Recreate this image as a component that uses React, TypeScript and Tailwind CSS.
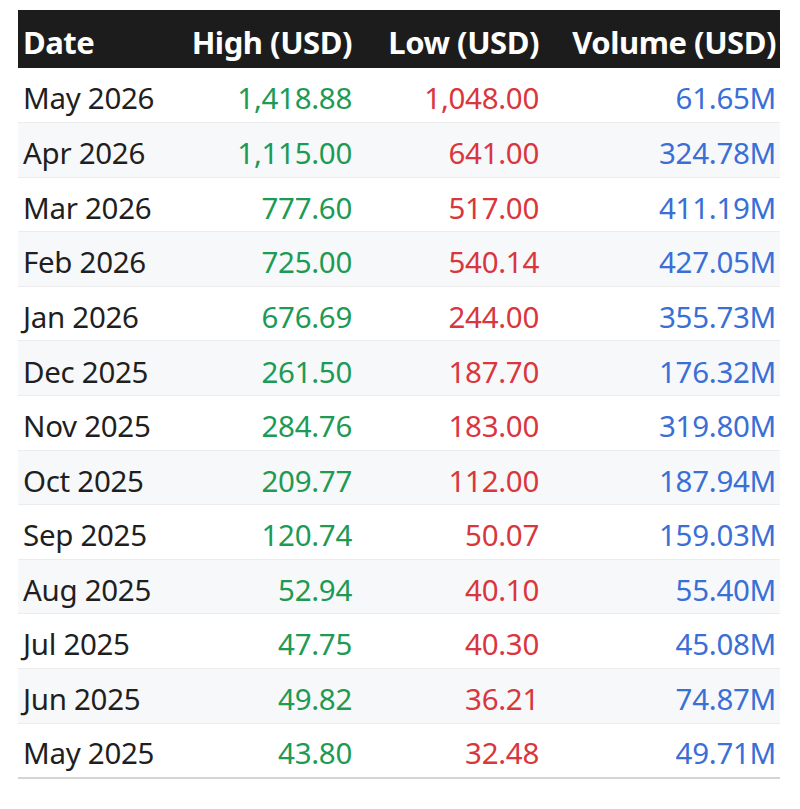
const rows = [
  ["May 2026", "1,418.88", "1,048.00", "61.65M"],
  ["Apr 2026", "1,115.00", "641.00", "324.78M"],
  ["Mar 2026", "777.60", "517.00", "411.19M"],
  ["Feb 2026", "725.00", "540.14", "427.05M"],
  ["Jan 2026", "676.69", "244.00", "355.73M"],
  ["Dec 2025", "261.50", "187.70", "176.32M"],
  ["Nov 2025", "284.76", "183.00", "319.80M"],
  ["Oct 2025", "209.77", "112.00", "187.94M"],
  ["Sep 2025", "120.74", "50.07", "159.03M"],
  ["Aug 2025", "52.94", "40.10", "55.40M"],
  ["Jul 2025", "47.75", "40.30", "45.08M"],
  ["Jun 2025", "49.82", "36.21", "74.87M"],
  ["May 2025", "43.80", "32.48", "49.71M"],
];

export default function App() {
  return (
    <div
      className="min-h-screen bg-white pt-[10px] pl-[18px]"
      style={{ fontFamily: '"Noto Sans", "Open Sans", sans-serif' }}
    >
      <table className="w-[762px] border-collapse text-[29.5px] tracking-[-0.01em]">
        <colgroup>
          <col className="w-[168px]" />
          <col className="w-[170px]" />
          <col className="w-[187px]" />
          <col className="w-[237px]" />
        </colgroup>
        <thead>
          <tr className="h-[58px] bg-[#1c1c1c] text-white font-bold text-[31px] tracking-[-0.015em]">
            <th className="px-[5px] pt-[6px] leading-none text-left">Date</th>
            <th className="px-[4px] pt-[6px] leading-none text-right">High (USD)</th>
            <th className="px-[4px] pt-[6px] leading-none text-right">Low (USD)</th>
            <th className="px-[4px] pt-[6px] leading-none text-right">Volume (USD)</th>
          </tr>
        </thead>
        <tbody>
          {rows.map((r, i) => (
            <tr
              key={r[0]}
              className={`h-[54.6px] ${
                i === rows.length - 1
                  ? "border-b-2 border-[#d4d4d4]"
                  : "border-b border-[#ececec]"
              } ${i % 2 === 1 ? "bg-[#f7f8fa]" : "bg-white"}`}
            >
              <td className="px-[5px] pt-[6px] leading-none text-left text-[#1f1f1f]">{r[0]}</td>
              <td className="px-[4px] pt-[6px] leading-none text-right text-[#1d9a54]">{r[1]}</td>
              <td className="px-[4px] pt-[6px] leading-none text-right text-[#d9363e]">{r[2]}</td>
              <td className="px-[4px] pt-[6px] leading-none text-right text-[#3a6fd6]">{r[3]}</td>
            </tr>
          ))}
        </tbody>
      </table>
    </div>
  );
}
